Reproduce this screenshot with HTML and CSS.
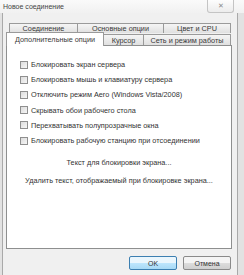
FILE: index.html
```html
<!DOCTYPE html>
<html lang="ru">
<head>
    <meta charset="UTF-8">
    <meta name="viewport" content="width=device-width, initial-scale=1.0">
    <title>Новое соединение</title>
    <link rel="stylesheet" href="styles.css">
</head>
<body>
    <div class="window">
        <div class="titlebar">
            <span class="title">Новое соединение</span>
            <span class="close">✕</span>
        </div>

        <div class="dialog">
            <div class="tabs">
                <div class="tab-row back">
                    <div class="tab w-conn">Соединение</div>
                    <div class="tab w-main">Основные опции</div>
                    <div class="tab w-color">Цвет и CPU</div>
                </div>
                <div class="tab-row front">
                    <div class="tab active w-extra">Дополнительные опции</div>
                    <div class="tab w-cursor">Курсор</div>
                    <div class="tab w-net">Сеть и режим работы</div>
                </div>
            </div>

            <div class="panel">
                <label class="check"><span class="box"></span>Блокировать экран сервера</label>
                <label class="check"><span class="box"></span>Блокировать мышь и клавиатуру сервера</label>
                <label class="check"><span class="box"></span>Отключить режим Aero (Windows Vista/2008)</label>
                <label class="check"><span class="box"></span>Скрывать обои рабочего стола</label>
                <label class="check"><span class="box"></span>Перехватывать полупрозрачные окна</label>
                <label class="check"><span class="box"></span>Блокировать рабочую станцию при отсоединении</label>

                <div class="link first">Текст для блокировки экрана...</div>
                <div class="link">Удалить текст, отображаемый при блокировке экрана...</div>
            </div>

            <div class="buttons">
                <button class="btn default">OK</button>
                <button class="btn">Отмена</button>
            </div>
        </div>
    </div>
</body>
</html>
```

FILE: styles.css
```css
* {
    margin: 0;
    padding: 0;
    box-sizing: border-box;
}

body {
    font-family: 'Liberation Sans', Arial, sans-serif;
    font-size: 7.3px;
    color: #333;
    background: #dcdcdc;
}

.window {
    width: 244px;
    height: 275px;
    background: #e2e2e2;
}

.titlebar {
    height: 13px;
    background: linear-gradient(#fafafa, #f1f1f1);
    display: flex;
    align-items: center;
    justify-content: space-between;
    padding-left: 3px;
    padding-right: 10px;
}

.title {
    font-size: 7px;
    color: #444;
}

.close {
    width: 27px;
    height: 13px;
    border: 1px solid #c4c4c4;
    border-top: none;
    border-radius: 0 0 3px 3px;
    background: linear-gradient(#fdfdfd, #ececec);
    color: #8a8a8a;
    font-size: 7px;
    display: flex;
    align-items: center;
    justify-content: center;
}

.dialog {
    margin-left: 2px;
    width: 236px;
    height: 262px;
    background: #f0f0f0;
    border-left: 1px solid #a9a9a9;
    border-right: 1px solid #a9a9a9;
    padding: 10px 5px 0 3px;
}

.tabs {
    font-size: 7.3px;
    color: #3a3a3a;
}

.tab-row {
    display: flex;
}

.tab-row.back {
    margin-left: 3px;
    height: 10px;
}

.tab-row.front {
    margin-top: 1px;
    height: 11px;
    position: relative;
    z-index: 1;
}

.tab {
    border: 1px solid #9a9a9a;
    border-bottom: none;
    background: linear-gradient(#f5f5f5, #e0e0e0);
    display: flex;
    align-items: center;
    justify-content: center;
    margin-right: -1px;
    white-space: nowrap;
}

.tab.active {
    background: #fff;
    margin-top: -2px;
    height: 14px;
    justify-content: flex-start;
    padding-left: 8px;
}

.w-conn { width: 69px; }
.w-main { width: 87px; }
.w-color { width: 68px; }
.w-extra { width: 98px; }
.w-cursor { width: 41px; }
.w-net { width: 88px; }

.panel {
    width: 226px;
    height: 204px;
    background: #fff;
    border: 1px solid #8e8f8f;
    padding: 11px 0 0 13px;
}

.check {
    display: flex;
    align-items: center;
    height: 15.2px;
    white-space: nowrap;
}

.box {
    width: 8px;
    height: 8px;
    border: 1px solid #8f8f8f;
    background: linear-gradient(135deg, #dcdcdc, #f6f6f6);
    margin-right: 3px;
}

.link {
    text-align: center;
    height: 18px;
    line-height: 18px;
    margin-left: -13px;
    white-space: nowrap;
}

.link.first {
    margin-top: 6px;
}

.buttons {
    display: flex;
    justify-content: flex-end;
    gap: 6px;
    margin-top: 7px;
    padding-right: 1px;
}

.btn {
    font-family: inherit;
    font-size: 7px;
    color: #333;
    height: 14px;
    width: 48px;
    border: 1px solid #8a8a8a;
    border-radius: 2px;
    background: linear-gradient(#f4f4f4 50%, #dddddd 50%, #cfcfcf);
}

.btn.default {
    border-color: #3c7fb1;
    background: linear-gradient(#eaf6fd 50%, #bee6fd 50%, #a7d9f5);
}
```
